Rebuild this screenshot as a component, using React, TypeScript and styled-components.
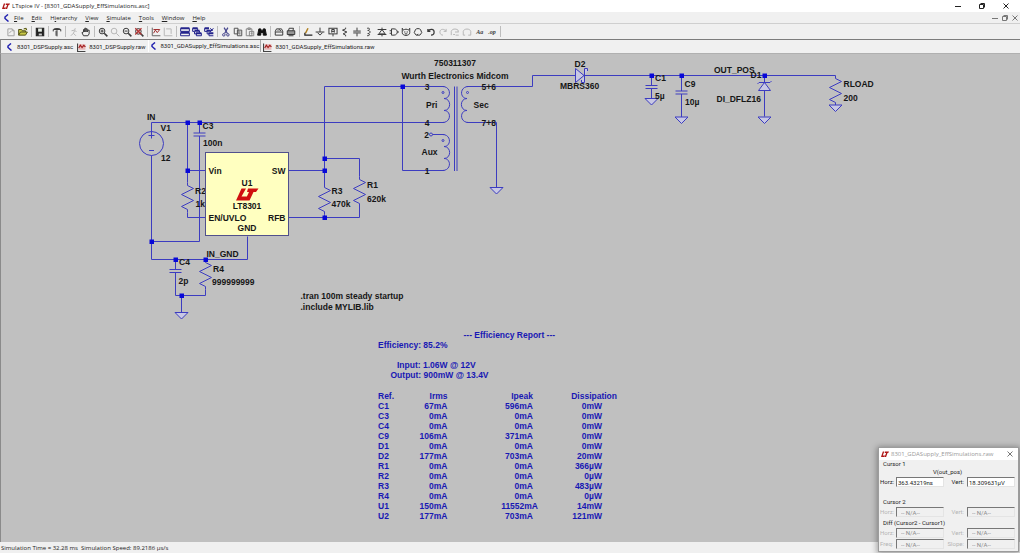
import React from "react";
import styled, { createGlobalStyle } from "styled-components";

const GlobalStyle = createGlobalStyle`
  * { box-sizing: border-box; }
  html, body { margin: 0; padding: 0; }
  body { background: #f0f0f0; }
  button, input { font: inherit; color: inherit; margin: 0; padding: 0; border: 0; background: none; }
`;

const ui = `"Open Sans", "Noto Sans", sans-serif`;
const classic = `"Liberation Sans", Arial, sans-serif`;
const compact = `Roboto, "Liberation Sans", sans-serif`;

const Shell = styled.div`
  position: relative;
  display: flex;
  flex-direction: column;
  min-height: 100vh;
  background: #f0f0f0;
  color: #222;
  font: 6px/10px ${ui};
`;

const TitleBar = styled.header`
  display: flex;
  align-items: center;
  height: 12px;
  padding: 0 2px;
  gap: 2px;
  background: #fff;
`;

const TitleText = styled.h1`
  flex: 1;
  margin: 0;
  font: inherit;
`;

const WindowControls = styled.div<{ $small?: boolean }>`
  display: flex;
  gap: ${(p) => (p.$small ? 0 : 14)}px;
  padding-right: ${(p) => (p.$small ? 0 : 7)}px;
`;

const ControlButton = styled.button<{ $muted?: boolean }>`
  display: flex;
  align-items: center;
  justify-content: center;
  width: 10px;
  height: 10px;
  color: ${(p) => (p.$muted ? "#777" : "#222")};
`;

const MenuBar = styled.nav`
  display: flex;
  align-items: center;
  height: 11px;
  padding: 0 0 0 3px;
`;

const MenuList = styled.div`
  display: flex;
  flex: 1;
  gap: 8px;
  padding-left: 3px;
`;

const MenuButton = styled.button`
  white-space: nowrap;
`;

const ToolBar = styled.div`
  display: flex;
  align-items: center;
  height: 16px;
  padding-left: 3px;
  border-top: 1px solid #cfcfcf;
`;

const ToolGroup = styled.div<{ $wide?: boolean }>`
  display: flex;
  justify-content: space-between;
  width: ${(p) => (p.$wide ? "196px" : "auto")};
  margin-left: 2px;
`;

const Separator = styled.span`
  width: 1px;
  height: 11px;
  margin-left: 2px;
  background: #bdbdbd;
`;

const ToolButton = styled.button<{ $color: string }>`
  display: flex;
  align-items: center;
  justify-content: center;
  width: 12px;
  height: 12px;
  color: ${(p) => p.$color};
`;

const TabStrip = styled.div`
  display: flex;
  height: 15px;
  padding-left: 3px;
  border-top: 1px solid #7c7c7c;
  border-left: 1px solid #8a8a8a;
  border-bottom: 1px solid #b0b0b0;
  font-family: ${compact};
`;

const Tab = styled.button<{ $active?: boolean }>`
  display: flex;
  align-items: center;
  gap: 3px;
  height: ${(p) => (p.$active ? 12 : 14)}px;
  padding: 0 1px;
  white-space: nowrap;
  border-left: 1px solid ${(p) => (p.$active ? "#fff" : "transparent")};
  border-right: 1px solid ${(p) => (p.$active ? "#aaa" : "transparent")};
`;

const Sheet = styled.main`
  flex: 1;
  background: #c0c0c0;
  box-shadow: inset 1px 0 0 #8a8a8a;
`;

const Drawing = styled.svg`
  display: block;
  width: 100%;
  height: auto;
`;

const Label = styled.text`
  font: bold 17px ${classic};
  fill: #161616;
`;

const Report = styled.section`
  color: #1818b4;
  font: bold 17px/20px ${classic};
  white-space: nowrap;
`;

const ReportTitle = styled.h2`
  margin: 0 0 0 171px;
  font: inherit;
`;

const ReportLine = styled.p<{ $indent?: number; $after?: number }>`
  margin: 0 0 ${(p) => p.$after ?? 0}px ${(p) => p.$indent ?? 0}px;
`;

const ReportTable = styled.table`
  width: 478px;
  border-collapse: collapse;
  table-layout: fixed;
`;

const HeadCell = styled.th<{ $width: number; $left?: boolean }>`
  width: ${(p) => p.$width}px;
  height: 20px;
  padding: 0;
  text-align: ${(p) => (p.$left ? "left" : "right")};
`;

const Cell = styled.td<{ $left?: boolean; $inset?: number }>`
  height: 20px;
  padding: 0 ${(p) => p.$inset ?? 0}px 0 0;
  text-align: ${(p) => (p.$left ? "left" : "right")};
`;

const Overhang = styled.span`
  margin-right: -10px;
`;

const StatusBar = styled.footer`
  height: 11px;
  padding: 2px 1px 0;
  line-height: 9px;
  white-space: pre;
`;

const CursorWindow = styled.aside`
  position: absolute;
  right: 1px;
  bottom: 1px;
  width: 141px;
  background: #f0f0f0;
  border: 1px solid #9c9c9c;
  box-shadow: 0 1px 6px 1px rgba(0, 0, 0, 0.35);
  color: #222;
  font: 6px/8px ${compact};
`;

const CursorTitle = styled.header`
  display: flex;
  align-items: center;
  gap: 2px;
  height: 12px;
  padding: 0 3px 0 2px;
  background: #fff;
  color: #999;
  font: 6px/10px ${ui};
`;

const CursorName = styled.h2`
  flex: 1;
  margin: 0;
  font: inherit;
`;

const CursorGroup = styled.fieldset<{ $height: number }>`
  display: flex;
  flex-direction: column;
  justify-content: flex-end;
  position: relative;
  height: ${(p) => p.$height}px;
  margin: 0;
  padding: 0 3px 1px 1px;
  border: 0;
`;

const GroupName = styled.legend`
  float: left;
  height: 8px;
  padding: 0 0 0 3px;
`;

const TraceName = styled.div`
  text-align: center;
`;

const ReadoutRow = styled.div`
  display: grid;
  grid-template-columns: 16px 48px 23px 1fr;
  align-items: center;
  height: 12px;
`;

const ReadoutLabel = styled.label<{ $off?: boolean; $right?: boolean }>`
  padding-right: ${(p) => (p.$right ? 3 : 0)}px;
  text-align: ${(p) => (p.$right ? "right" : "left")};
  color: ${(p) => (p.$off ? "#b4b4b4" : "#222")};
`;

const Readout = styled.input<{ $off?: boolean }>`
  width: 100%;
  height: 10px;
  padding: 0 0 0 ${(p) => (p.$off ? 4 : 1)}px;
  border: 1px solid;
  border-color: #777 #e4e4e4 #e4e4e4 #777;
  background: ${(p) => (p.$off ? "#f0f0f0" : "#fff")};
  color: ${(p) => (p.$off ? "#8a8a8a" : "#222")};
`;

/* ---------- icons ---------- */

const Logo = ({ size = 8 }: { size?: number }) => (
  <svg width={size} height={size} viewBox="0 0 22 20" fill="#b01818" aria-hidden="true">
    <path d="M5 3H9L5 14H11L9 18H0Z M11 3H22L20 7H18L14 18H10L14 7H10Z" />
  </svg>
);

const SchematicIcon = () => (
  <svg width="8" height="8" viewBox="0 0 16 16" fill="none" stroke="#2222b0" strokeWidth="3" aria-hidden="true">
    <path d="M10 1L4 6V9L11 15" />
  </svg>
);

const PlotIcon = () => (
  <svg width="9" height="9" viewBox="0 0 16 16" fill="none" aria-hidden="true">
    <path d="M1 1V15H15" stroke="#444" strokeWidth="2" />
    <rect x="3" y="2" width="12" height="10" fill="#e8b8b8" />
    <path d="M3 9L6 4L9 8L12 4L15 7" stroke="#a01c1c" strokeWidth="2" />
  </svg>
);

const glyphs: Record<string, React.ReactNode> = {
  new: <path d="M3 3H10L13 6V14H3ZM5 10L9 6M10 3V6H13" />,
  open: <path d="M1 13V4H6L7 6H12V8M1 13L4 8H15L12 13ZM9 3L13 2L14 5" fill="#b8b800" fillOpacity="0.7" />,
  save: <><rect x="2" y="2" width="12" height="12" fill="currentColor" /><rect x="5" y="2.5" width="6" height="5" fill="#e8f0e8" stroke="none" /><rect x="6" y="10.5" width="5" height="3" fill="#ccc" stroke="none" /></>,
  hammer: <path d="M2 7V4L5 2.500H11L14 4V7M3 4H13M8 5V15M6.500 6V14" />,
  run: <path d="M10 2L9 5M4 6L9 5L12 8M9 6L7 10L3 14M7 10L11 14" />,
  hand: <path d="M4 14L1.500 9L4 8V4L6 4V8V2H8V8V3H10V8L11 5H13V11L11 14Z" />,
  zoomIn: <><circle cx="6.500" cy="6.500" r="4.500" /><path d="M10 10L15 15" strokeWidth="2.500" /><path d="M4 6.500H9M6.500 4V9" /></>,
  zoomBox: <><circle cx="6.500" cy="6.500" r="4.500" /><path d="M10 10L15 15" /></>,
  zoomOut: <><circle cx="6.500" cy="6.500" r="4.500" /><path d="M10 10L15 15" strokeWidth="2.500" /><path d="M4 6.500H9" /></>,
  zoomFit: <><circle cx="7" cy="7" r="4.500" fill="#e8c8c8" /><path d="M10 10L15 15" strokeWidth="2.500" /><path d="M2 2L12 12M12 2L2 12" stroke="#b03030" strokeWidth="1.800" /></>,
  plot: <><path d="M2 1V14H15" /><path d="M4 10L7 5L10 9L14 4M4 4H14" stroke="#a03030" /></>,
  plotOff: <path d="M2 1V14H15M5 3H13V11" />,
  tile: <><path d="M1 2H15M1 9H15" strokeWidth="3.500" /><path d="M1 2V7H15V2M1 9V14H15V9" /></>,
  cascade: <><path d="M1 2H9M4 6H12M6 10H15" strokeWidth="3" /><path d="M1 2V7H4V11H7V14H15V10M9 2V6M12 6V9" /></>,
  closeAll: <><path d="M1 2H8M4 6H11M7 10H15" strokeWidth="3" /><path d="M1 2V7H5V11H8V14H15M10 8L15 2M10 2L14 6" /></>,
  cut: <><path d="M5 1L10 10M11 1L6 10" strokeWidth="2" /><circle cx="4.500" cy="12.500" r="2" /><circle cx="11" cy="12.500" r="2" /></>,
  copy: <path d="M2 2H8V11H2ZM7 5H14V14H7ZM9 8H12M9 11H12" />,
  paste: <path d="M2 3H11V14H2ZM4.500 3V1.500H8.500V4H4.500M7 7H14V14H7ZM9 10H12" />,
  find: <path d="M3 3H6L7 6H9L10 3H13L15 13H10V9H6V13H1Z" fill="currentColor" />,
  preview: <><path d="M2 7L4 3H12L14 7V13H2ZM2 8H14" /><path d="M6 6L8 4L11 6" /></>,
  print: <><path d="M4 6L5 2H12L11 6" /><path d="M2 6H14V12H2Z" fill="currentColor" fillOpacity="0.5" /><path d="M4 14H12" /></>,
  wire: <><path d="M4 10L8 2" stroke="#b08020" strokeWidth="2.500" /><path d="M3 9V13H15" stroke="#222" strokeWidth="2" /></>,
  ground: <path d="M8 1V8M1 8H15M4 9L8 13L12 9" />,
  net: <><rect x="1.500" y="2" width="13" height="9" /><path d="M8 15V11M6 9V4H10V9M6 7H10" /></>,
  resistor: <path d="M9 1V3L4 5L11 8L5 11L9 13V15" />,
  cap: <path d="M8 1V6M2 6.500H14M2 9.500H14M8 10V15" />,
  inductor: <path d="M5 2C10 1 10 5 6 5.500C11 6 11 10 6 10.500C10 11 10 14 5 14" />,
  diode: <path d="M1 4H15M8 1V4M8 4L3 11H13ZM1 12H15M8 12V15" />,
  gate: <path d="M4 3H8C15 3 15 13 8 13H4ZM1 6H4M1 10H4M13 8H16" />,
  move: <path d="M2 2L4 5C6 3 10 3 12 5L14 2V9C14 15 2 15 2 9ZM5 8H7M9 8H11M6 11H10" />,
  drag: <path d="M4 4C6 2 10 2 12 4L14 9L11 13H5L2 9ZM6 13L8 11" />,
  undo: <path d="M3 3V7H7M3 7C6 2 13 3 13 8C13 11 11 13 8 13" strokeWidth="2" />,
  redo: <path d="M13 3V7H9M13 7C10 2 3 3 3 8C3 11 5 13 8 13" />,
  mirror: <path d="M2 13V7C3 3 9 2 13 5V8M5 12H8M8 8H14M9 13H14" />,
  rotate: <path d="M2 13V7C3 2 13 2 14 7V13H10M2 13H5" />,
};

const Glyph = ({ name }: { name: string }) => (
  <svg width="10" height="10" viewBox="0 0 16 16" fill="none" stroke="currentColor" strokeWidth="1.600" aria-hidden="true">
    {glyphs[name]}
  </svg>
);

const TextTool = styled.span`
  font: italic bold 6px/8px "Liberation Serif", serif;
`;

/* ---------- tool bar data ---------- */

const dark = "#3c3c3c";
const grey = "#b8b8b8";
const navy = "#24248c";

type Tool = [string, string, string];
const toolGroups: Tool[][] = [
  [["new", "New schematic", "#a4a4a4"], ["open", "Open", "#55551c"]],
  [["save", "Save", "#222"]],
  [["hammer", "Control panel", dark]],
  [["run", "Run", grey], ["hand", "Halt", dark]],
  [["zoomIn", "Zoom to rectangle", dark], ["zoomBox", "Pan", grey], ["zoomOut", "Zoom back", dark], ["zoomFit", "Zoom full extents", dark]],
  [["plot", "Autorange", "#666"], ["plotOff", "Plot settings", grey]],
  [["tile", "Tile windows", navy], ["cascade", "Cascade windows", navy], ["closeAll", "Close all windows", navy]],
  [["cut", "Cut", "#44448c"], ["copy", "Copy", "#555"], ["paste", "Paste", "#888"], ["find", "Find", "#111"]],
  [["preview", "Print preview", dark], ["print", "Print", dark]],
];

const drawTools: Tool[] = [
  ["wire", "Wire", dark], ["ground", "Ground", dark], ["net", "Label net", dark], ["resistor", "Resistor", dark],
  ["cap", "Capacitor", dark], ["inductor", "Inductor", dark], ["diode", "Diode", dark], ["gate", "Component", dark],
  ["move", "Move", dark], ["drag", "Drag", dark], ["undo", "Undo", dark], ["redo", "Redo", grey],
  ["mirror", "Mirror", grey], ["rotate", "Rotate", grey],
];

const menus: [string, string, string][] = [
  ["", "F", "ile"], ["", "E", "dit"], ["H", "i", "erarchy"], ["", "V", "iew"],
  ["", "S", "imulate"], ["", "T", "ools"], ["", "W", "indow"], ["", "H", "elp"],
];

/* ---------- schematic symbols, in sheet units ---------- */

const INK = "#3c3cc0";

const Junction = ({ x, y }: { x: number; y: number }) => (
  <rect x={x - 4} y={y - 4} width="9" height="9" fill="#0808d8" stroke="none" />
);

const Resistor = ({ x, y }: { x: number; y: number }) => (
  <path d={`M${x} ${y}v6l12 6l-24 12l24 12l-24 12l12 6v6`} />
);

const Ground = ({ x, y }: { x: number; y: number }) => (
  <path d={`M${x - 13} ${y}h26l-13 13z`} fill="#c8c8e4" />
);

const Capacitor = ({ x, y }: { x: number; y: number }) => (
  <path d={`M${x - 12} ${y}h24M${x - 12} ${y + 6}h24`} />
);

const junctions = [
  [375, 245], [399, 245], [375, 341], [303, 483], [351, 519], [411, 519], [363, 591],
  [649, 317], [649, 341], [649, 435], [805, 173], [1303, 151], [1363, 151], [1529, 151],
];

const labels: [string, number, number, ("middle" | "end")?][] = [
  ["IN", 294, 240], ["V1", 321, 262], ["12", 322, 322], ["C3", 405, 257], ["100n", 406, 292],
  ["C4", 358, 530], ["2p", 357, 567], ["IN_GND", 413, 514], ["R4", 426, 543], ["999999999", 424, 570],
  ["R3", 663, 388], ["470k", 663, 414], ["R1", 734, 376], ["620k", 734, 403],
  [".tran 100m steady startup", 601, 597], [".include MYLIB.lib", 601, 620],
  ["750311307", 910, 132, "middle"], ["Wurth Electronics Midcom", 910, 157, "middle"],
  ["3", 854, 180, "middle"], ["Pri", 852, 216], ["4", 854, 251, "middle"], ["2", 853, 275, "middle"],
  ["Aux", 843, 310], ["1", 854, 347, "middle"], ["5+6", 963, 180], ["Sec", 947, 216], ["7+8", 963, 251],
  ["D2", 1149, 133], ["MBRS360", 1120, 178], ["C1", 1310, 161], ["5µ", 1310, 198],
  ["C9", 1369, 173], ["10µ", 1370, 210], ["OUT_POS", 1428, 145], ["D1", 1501, 156], ["DI_DFLZ16", 1433, 203],
  ["RLOAD", 1687, 173], ["200", 1687, 201],
];

const chipLabels: typeof labels = [
  ["Vin", 417, 347], ["SW", 571, 347, "end"], ["U1", 494, 371, "middle"], ["LT8301", 494, 418, "middle"],
  ["EN/UVLO", 417, 441], ["RFB", 571, 441, "end"], ["GND", 494, 461, "middle"],
];

const reportRows = [
  ["C1", "67mA", "596mA", "0mW"], ["C3", "0mA", "0mA", "0mW"], ["C4", "0mA", "0mA", "0mW"],
  ["C9", "106mA", "371mA", "0mW"], ["D1", "0mA", "0mA", "0mW"], ["D2", "177mA", "703mA", "20mW"],
  ["R1", "0mA", "0mA", "366µW"], ["R2", "0mA", "0mA", "0µW"], ["R3", "0mA", "0mA", "483µW"],
  ["R4", "0mA", "0mA", "0µW"], ["U1", "150mA", "11552mA", "14mW"], ["U2", "177mA", "703mA", "121mW"],
];

const Labels = ({ items }: { items: typeof labels }) => (
  <>
    {items.map(([text, x, y, anchor]) => (
      <Label key={text + x + y} x={x} y={y} textAnchor={anchor}>{text}</Label>
    ))}
  </>
);

const Schematic = () => (
  <Drawing viewBox="0 108 2040 976" role="img" aria-label="LT8301 flyback supply schematic">
    <g fill="none" stroke={INK} strokeWidth="2">
      {/* input source and rails */}
      <path d="M303 267V245H889M303 311V519H495V473M375 245V341H411M375 341V365M375 425V435H411" />
      <circle cx="303" cy="287" r="24" />
      <path d="M303 263V277M297 271H309M298 301H308" />
      <path d="M399 245V266M399 272V483H303" />
      <Capacitor x={399} y={266} />
      <Resistor x={375} y={365} />
      <path d="M351 519V539M351 545V591H411V579M363 591V625" />
      <Capacitor x={351} y={539} />
      <Resistor x={411} y={519} />
      <Ground x={363} y={625} />
      {/* switch node and feedback */}
      <path d="M577 341H649M577 435H719V411M649 370V173H889M649 317H719V353M649 429V435" />
      <Resistor x={649} y={369} />
      <Resistor x={719} y={353} />
      <path d="M805 173V341H889M865 269H889" />
      <circle cx="862" cy="269" r="3" />
      {/* transformer */}
      <path d="M885 173c18 0 18 24 3 24c15 0 15 24 0 24c15 0 15 24 -3 24M885 269c18 0 18 24 3 24c15 0 15 24 0 24c15 0 15 24 -3 24" />
      <path d="M937 173c-18 0 -18 24 -3 24c-15 0 -15 24 0 24c-15 0 -15 24 3 24" />
      <path d="M909 173V342M914 173V342" />
      <circle cx="886" cy="185" r="2" />
      <circle cx="886" cy="281" r="2" />
      <circle cx="935" cy="185" r="2" />
      <path d="M933 173H1065V151H1671M933 245H993V375" />
      <Ground x={993} y={375} />
      {/* rectifier and output */}
      <path d="M1151 137V165L1168 151ZM1175 142V137H1169V165H1163V160" fill="#c8c8e4" />
      <path d="M1303 151V171M1303 177V197M1363 151V182M1363 188V234M1529 151V233" />
      <Capacitor x={1303} y={171} />
      <Capacitor x={1363} y={182} />
      <Ground x={1303} y={197} />
      <Ground x={1363} y={234} />
      <path d="M1517 181H1541L1529 165ZM1515 168L1518 165H1540L1543 162" fill="#c8c8e4" />
      <Ground x={1529} y={234} />
      <Resistor x={1671} y={151} />
      <Ground x={1671} y={210} />
      {junctions.map(([x, y]) => <Junction key={`${x}-${y}`} x={x} y={y} />)}
    </g>
    <Label x="390" y="388">R2</Label>
    <Label x="391" y="414">1k</Label>
    <rect x="411" y="305" width="166" height="166" fill="#ffffc0" stroke="#50508c" strokeWidth="2" />
    <path d="M483 377H492L483 393H497L491 401H472Z M496 377H517L512 384H507L499 401H490L498 384H494Z" fill="#d01010" />
    <Labels items={labels} />
    <Labels items={chipLabels} />
    <foreignObject x="756" y="661" width="520" height="390">
      <Report>
        <ReportTitle>--- Efficiency Report ---</ReportTitle>
        <ReportLine $after={20}>Efficiency: 85.2%</ReportLine>
        <ReportLine $indent={38}>Input: 1.06W @ 12V</ReportLine>
        <ReportLine $indent={25} $after={22}>Output: 900mW @ 13.4V</ReportLine>
        <ReportTable>
          <thead>
            <tr>
              <HeadCell $width={60} $left>Ref.</HeadCell>
              <HeadCell $width={79}>Irms</HeadCell>
              <HeadCell $width={171}>Ipeak</HeadCell>
              <HeadCell $width={168}>Dissipation</HeadCell>
            </tr>
          </thead>
          <tbody>
            {reportRows.map(([ref, rms, peak, loss]) => (
              <tr key={ref}>
                <Cell $left>{ref}</Cell>
                <Cell>{rms}</Cell>
                <Cell>{peak.length > 6 ? <Overhang>{peak}</Overhang> : peak}</Cell>
                <Cell $inset={30}>{loss}</Cell>
              </tr>
            ))}
          </tbody>
        </ReportTable>
      </Report>
    </foreignObject>
  </Drawing>
);

/* ---------- cursor read-out window ---------- */

const Reading = ({ id, names, values, off }: { id: string; names: [string, string]; values: [string, string]; off?: boolean }) => (
  <ReadoutRow>
    <ReadoutLabel htmlFor={`${id}-x`} $off={off}>{names[0]}</ReadoutLabel>
    <Readout id={`${id}-x`} defaultValue={values[0]} readOnly $off={off} />
    <ReadoutLabel htmlFor={`${id}-y`} $off={off} $right>{names[1]}</ReadoutLabel>
    <Readout id={`${id}-y`} defaultValue={values[1]} readOnly $off={off} />
  </ReadoutRow>
);

const NA: [string, string] = ["-- N/A--", "-- N/A--"];

const MinIcon = () => <svg width="6" height="6" viewBox="0 0 6 6"><path d="M0 3.500H6" stroke="currentColor" /></svg>;
const RestoreIcon = () => (
  <svg width="6" height="6" viewBox="0 0 6 6" fill="none" stroke="currentColor"><path d="M0.500 1.500H4.500V5.500H0.500ZM1.500 0.500H5.500V4.500" /></svg>
);
const CloseIcon = () => <svg width="6" height="6" viewBox="0 0 6 6"><path d="M0.500 0.500L5.500 5.500M5.500 0.500L0.500 5.500" stroke="currentColor" /></svg>;

export default function App() {
  return (
    <>
      <GlobalStyle />
      <Shell>
        <TitleBar>
          <Logo />
          <TitleText>LTspice IV - [8301_GDASupply_EffSimulations.asc]</TitleText>
          <WindowControls>
            <ControlButton aria-label="Minimize"><MinIcon /></ControlButton>
            <ControlButton aria-label="Restore"><RestoreIcon /></ControlButton>
            <ControlButton aria-label="Close"><CloseIcon /></ControlButton>
          </WindowControls>
        </TitleBar>
        <MenuBar>
          <SchematicIcon />
          <MenuList>
            {menus.map(([before, key, after]) => (
              <MenuButton key={after}>{before}<u>{key}</u>{after}</MenuButton>
            ))}
          </MenuList>
          <WindowControls $small>
            <ControlButton $muted aria-label="Minimize sheet"><MinIcon /></ControlButton>
            <ControlButton $muted aria-label="Restore sheet"><RestoreIcon /></ControlButton>
            <ControlButton $muted aria-label="Close sheet"><CloseIcon /></ControlButton>
          </WindowControls>
        </MenuBar>
        <ToolBar>
          {toolGroups.map((group) => (
            <React.Fragment key={group[0][0]}>
              <ToolGroup>
                {group.map(([name, title, color]) => (
                  <ToolButton key={name} aria-label={title} $color={color}><Glyph name={name} /></ToolButton>
                ))}
              </ToolGroup>
              <Separator />
            </React.Fragment>
          ))}
          <ToolGroup $wide>
            {drawTools.map(([name, title, color]) => (
              <ToolButton key={name} aria-label={title} $color={color}><Glyph name={name} /></ToolButton>
            ))}
            <ToolButton $color={dark}><TextTool>Aa</TextTool></ToolButton>
            <ToolButton $color={dark}><TextTool>.op</TextTool></ToolButton>
          </ToolGroup>
          <Separator />
        </ToolBar>
        <TabStrip>
          <Tab><SchematicIcon />8301_DSPSupply.asc</Tab>
          <Tab><PlotIcon />8301_DSPSupply.raw</Tab>
          <Tab $active><SchematicIcon />8301_GDASupply_EffSimulations.asc</Tab>
          <Tab><PlotIcon />8301_GDASupply_EffSimulations.raw</Tab>
        </TabStrip>
        <Sheet>
          <Schematic />
        </Sheet>
        <StatusBar>{"Simulation Time = 32.28 ms  Simulation Speed: 89.2186 µs/s"}</StatusBar>
        <CursorWindow>
          <CursorTitle>
            <Logo />
            <CursorName>8301_GDASupply_EffSimulations.raw</CursorName>
            <ControlButton $muted aria-label="Close cursor window"><CloseIcon /></ControlButton>
          </CursorTitle>
          <CursorGroup $height={29}>
            <GroupName>Cursor 1</GroupName>
            <TraceName>V(out_pos)</TraceName>
            <Reading id="c1" names={["Horz:", "Vert:"]} values={["363.43219ns", "18.309631µV"]} />
          </CursorGroup>
          <CursorGroup $height={30}>
            <GroupName>Cursor 2</GroupName>
            <Reading id="c2" names={["Horz:", "Vert:"]} values={NA} off />
          </CursorGroup>
          <CursorGroup $height={32}>
            <GroupName>Diff (Cursor2 - Cursor1)</GroupName>
            <Reading id="d1" names={["Horz:", "Vert:"]} values={NA} off />
            <Reading id="d2" names={["Freq:", "Slope:"]} values={NA} off />
          </CursorGroup>
        </CursorWindow>
      </Shell>
    </>
  );
}
